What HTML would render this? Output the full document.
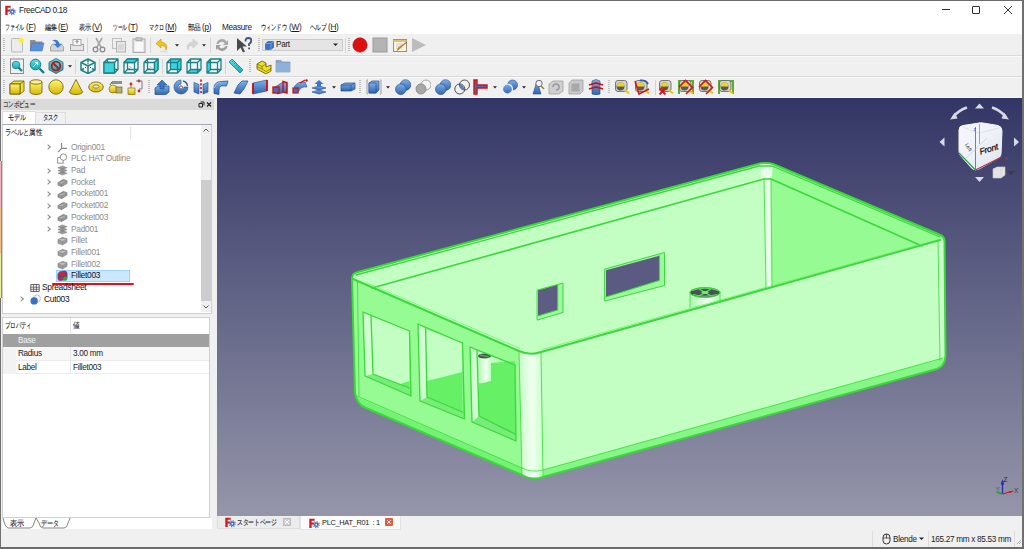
<!DOCTYPE html>
<html><head><meta charset="utf-8">
<style>
*{box-sizing:border-box;margin:0;padding:0}
html,body{width:1024px;height:549px;overflow:hidden;background:#f0f0f0;font-family:"Liberation Sans",sans-serif;color:#000}
.a{position:absolute}
.t{position:absolute;white-space:nowrap;font-size:8.2px;line-height:10px;color:#1a1a1a;letter-spacing:-0.3px}
.m{font-size:8.2px}
.j{font-size:6.4px}
.grip{width:2px;height:14px;background:repeating-linear-gradient(#bdbdbd 0 1px,transparent 1px 2px)}
.sep{width:1px;height:15px;background:#d4d4d4}
.ti{position:absolute;left:71px;white-space:nowrap;font-size:8.4px;line-height:11px;color:#8c8c8c;letter-spacing:-0.28px;margin-top:0.3px}
.arr{position:absolute;left:46px;width:4px;height:4px;border-right:1px solid #8a8a8a;border-top:1px solid #8a8a8a;transform:rotate(45deg)}
.row{position:absolute;left:16px;width:195px;height:14px;font-size:7.6px;line-height:14px;white-space:nowrap}
</style></head>
<body>
<svg width="0" height="0" style="position:absolute">
<defs>
<linearGradient id="gy" x1="0" y1="0" x2="0" y2="1"><stop offset="0" stop-color="#fff27a"/><stop offset="1" stop-color="#d8b800"/></linearGradient>
<linearGradient id="gb" x1="0" y1="0" x2="0" y2="1"><stop offset="0" stop-color="#7fb0e8"/><stop offset="1" stop-color="#2f64b0"/></linearGradient>
<linearGradient id="gt" x1="0" y1="0" x2="0" y2="1"><stop offset="0" stop-color="#5ee0e8"/><stop offset="1" stop-color="#1aa8b4"/></linearGradient>
<symbol id="i-new" viewBox="0 0 16 16"><rect x="2.5" y="1.5" width="11" height="13.5" rx="1" fill="#ececec" stroke="#b8b8b8"/><circle cx="12.2" cy="3.2" r="2.6" fill="#f6f03a"/></symbol>
<symbol id="i-open" viewBox="0 0 16 16"><path d="M1,3h5l1,1.5h6.5V13H1z" fill="#8e8e8e"/><path d="M3,6h12l-2,8H1z" fill="#5a90d8" stroke="#3c70b8" stroke-width="0.5"/></symbol>
<symbol id="i-save" viewBox="0 0 16 16"><path d="M1.5,10l2-3h9l2,3v4h-13z" fill="#d4d4d4" stroke="#8c8c8c" stroke-width="0.7"/><path d="M3,3.5Q9,1 10.5,7h2.3l-4,4-4-4h2.3Q7,4.5 3,3.5z" fill="#3c7cd0"/></symbol>
<symbol id="i-print" viewBox="0 0 16 16"><rect x="1.5" y="7.5" width="13" height="6" fill="#e6e6e6" stroke="#a4a4a4"/><rect x="4" y="2.5" width="8" height="6" fill="#f6f6f6" stroke="#a8a8a8"/><path d="M8,3.5v3M6.5,5l1.5-1.5L9.5,5" stroke="#808080" fill="none"/></symbol>
<symbol id="i-cut" viewBox="0 0 16 16"><path d="M5,1l5.5,10M11,1L5.5,11" stroke="#a8a8a8" stroke-width="1.6" fill="none"/><circle cx="4.5" cy="12.5" r="2.3" fill="none" stroke="#8a8a8a" stroke-width="1.3"/><circle cx="11.5" cy="12.5" r="2.3" fill="none" stroke="#8a8a8a" stroke-width="1.3"/></symbol>
<symbol id="i-copy" viewBox="0 0 16 16"><rect x="1.5" y="1.5" width="9" height="10" fill="#eee" stroke="#c0c0c0"/><rect x="5.5" y="4.5" width="9" height="10.5" fill="#e8e8e8" stroke="#b0b0b0"/><path d="M7,8h6M7,10h6M7,12h6" stroke="#c8c8c8"/></symbol>
<symbol id="i-paste" viewBox="0 0 16 16"><rect x="2" y="2" width="12" height="13.5" fill="#e8e8e8" stroke="#a8a8a8"/><rect x="5" y="0.8" width="6" height="3" fill="#c8c8c8" stroke="#909090" stroke-width="0.6"/><rect x="4" y="5" width="8" height="9" fill="#f8f8f8"/></symbol>
<symbol id="i-undo" viewBox="0 0 16 16"><path d="M6,2L1,6.5 6,11V8.5Q11,8 11,13Q14,6 6,5z" fill="#f4c418" stroke="#c89400" stroke-width="0.6"/><ellipse cx="9" cy="14.5" rx="4" ry="1" fill="#ddd"/></symbol>
<symbol id="i-redo" viewBox="0 0 16 16"><path d="M10,2L15,6.5 10,11V8.5Q5,8 5,13Q2,6 10,5z" fill="#d6d6d6" stroke="#c4c4c4" stroke-width="0.6"/></symbol>
<symbol id="i-refresh" viewBox="0 0 16 16"><path d="M2.5,7A5.5,5.5 0 0 1 12.5,4.5L14,3v5H9l1.8-1.8A3.5,3.5 0 0 0 4.6,7z" fill="#a8a8a8"/><path d="M13.5,9A5.5,5.5 0 0 1 3.5,11.5L2,13V8h5l-1.8,1.8A3.5,3.5 0 0 0 11.4,9z" fill="#a0a0a0"/></symbol>
<symbol id="i-what" viewBox="0 0 16 16"><path d="M1,1v13l3.5-3.5 2.5,5 2-1-2.5-5H11z" fill="#4a4a4a"/><path d="M9.5,4.5Q9.5,1 12.3,1Q15.5,1 15.3,4Q15,6 13,7v2" fill="none" stroke="#3e5680" stroke-width="1.8"/><rect x="12.2" y="10.5" width="1.8" height="1.8" fill="#3e5680"/></symbol>
<symbol id="i-rec" viewBox="0 0 16 16"><circle cx="8" cy="8" r="7.2" fill="#dd1010" stroke="#a00" stroke-width="0.5"/></symbol>
<symbol id="i-stop" viewBox="0 0 16 16"><rect x="1" y="1" width="14" height="14" fill="#b4b4b4" stroke="#9a9a9a"/></symbol>
<symbol id="i-macro" viewBox="0 0 16 16"><rect x="1.5" y="2.5" width="13" height="12" fill="#f8f4e4" stroke="#a09070"/><path d="M1.5,4h13" stroke="#e0c070" stroke-width="2"/><path d="M4,7h7M4,9h5M4,11h6" stroke="#c8c0b0" stroke-width="0.7"/><path d="M15,5L7,12l-1.5,1.5L6,11z" fill="#f0a030" stroke="#905020" stroke-width="0.6"/></symbol>
<symbol id="i-play" viewBox="0 0 16 16"><path d="M1,1L15,8L1,15z" fill="#bcbcbc"/></symbol>
<symbol id="i-dd" viewBox="0 0 4 4"><path d="M0,1.2h4L2,3.4z" fill="#222"/></symbol>
<symbol id="i-fitall" viewBox="0 0 16 16"><rect x="1.5" y="1" width="13" height="14.5" fill="#f0f0f0" stroke="#8c8c8c"/><circle cx="7" cy="7" r="3.8" fill="url(#gt)" stroke="#157c86" stroke-width="0.8"/><path d="M9.5,9.5L13,13" stroke="#157c86" stroke-width="2.2"/></symbol>
<symbol id="i-fitsel" viewBox="0 0 16 16"><circle cx="6.5" cy="6.5" r="5.3" fill="url(#gt)" stroke="#157c86" stroke-width="1"/><path d="M10.5,10.5L15,15" stroke="#157c86" stroke-width="2.4"/><path d="M4.5,8.5L8.5,4.5M6,4.5h2.5v2.5" stroke="#fff" stroke-width="1" fill="none"/></symbol>
<symbol id="i-draw" viewBox="0 0 16 16"><path d="M8,0.5L15,4.3v7.4L8,15.5 1,11.7V4.3z" fill="url(#gt)" stroke="#155e66" stroke-width="0.8"/><circle cx="8" cy="8" r="4.3" fill="none" stroke="#c41010" stroke-width="1.8"/><path d="M5,5L11,11" stroke="#c41010" stroke-width="1.8"/></symbol>
<symbol id="i-iso" viewBox="0 0 16 16"><path d="M8,1L15,4.5v7.5L8,15.5 1,12V4.5z" fill="#f4fbfb" stroke="#1e8088" stroke-width="1.5" fill="none" stroke-linejoin="round"/><path d="M1,4.5L8,8 15,4.5M8,8v7.5M8,1V4M1,12L4,10.5M15,12L12,10.5" stroke="#1e8088" stroke-width="1.5" fill="none" stroke-linejoin="round" stroke-width="1.1"/><path d="M8,4.5v2M5,10l1-1M11,10l-1-1" stroke="#222" stroke-width="0.8"/></symbol>
<symbol id="i-front" viewBox="0 0 16 16"><rect x="2" y="2" width="12" height="12" fill="#f4fbfb"/><path d="M1,4.5H11.5V15H1z M4.5,1H15V11.5H4.5z M1,4.5L4.5,1 M11.5,4.5L15,1 M11.5,15L15,11.5 M1,15L4.5,11.5" stroke="#1e8088" stroke-width="1.3" fill="none" stroke-linejoin="round"/><path d="M1,4.5H11.5V15H1z" fill="#3cd4dc" stroke="#1e8088" stroke-width="1.3"/></symbol>
<symbol id="i-top" viewBox="0 0 16 16"><rect x="2" y="2" width="12" height="12" fill="#f4fbfb"/><path d="M7,8.5l1,1M8,11v1M5.5,11l1-1" stroke="#222" stroke-width="0.7"/><path d="M1,4.5H11.5V15H1z M4.5,1H15V11.5H4.5z M1,4.5L4.5,1 M11.5,4.5L15,1 M11.5,15L15,11.5 M1,15L4.5,11.5" stroke="#1e8088" stroke-width="1.3" fill="none" stroke-linejoin="round"/><path d="M1,4.5L4.5,1H15L11.5,4.5z" fill="#3cd4dc" stroke="#1e8088" stroke-width="1.3" stroke-linejoin="round"/></symbol>
<symbol id="i-right" viewBox="0 0 16 16"><rect x="2" y="2" width="12" height="12" fill="#f4fbfb"/><path d="M7,8.5l1,1M8,11v1M5.5,11l1-1" stroke="#222" stroke-width="0.7"/><path d="M1,4.5H11.5V15H1z M4.5,1H15V11.5H4.5z M1,4.5L4.5,1 M11.5,4.5L15,1 M11.5,15L15,11.5 M1,15L4.5,11.5" stroke="#1e8088" stroke-width="1.3" fill="none" stroke-linejoin="round"/><path d="M11.5,4.5L15,1v10.5L11.5,15z" fill="#3cd4dc" stroke="#1e8088" stroke-width="1.3" stroke-linejoin="round"/></symbol>
<symbol id="i-rear" viewBox="0 0 16 16"><rect x="2" y="2" width="12" height="12" fill="#f4fbfb"/><rect x="4.5" y="1" width="10.5" height="10.5" fill="#3cd4dc"/><path d="M1,4.5H11.5V15H1z M4.5,1H15V11.5H4.5z M1,4.5L4.5,1 M11.5,4.5L15,1 M11.5,15L15,11.5 M1,15L4.5,11.5" stroke="#1e8088" stroke-width="1.3" fill="none" stroke-linejoin="round"/></symbol>
<symbol id="i-bottom" viewBox="0 0 16 16"><rect x="2" y="2" width="12" height="12" fill="#f4fbfb"/><path d="M1,15L4.5,11.5H15L11.5,15z" fill="#3cd4dc"/><path d="M1,4.5H11.5V15H1z M4.5,1H15V11.5H4.5z M1,4.5L4.5,1 M11.5,4.5L15,1 M11.5,15L15,11.5 M1,15L4.5,11.5" stroke="#1e8088" stroke-width="1.3" fill="none" stroke-linejoin="round"/></symbol>
<symbol id="i-left" viewBox="0 0 16 16"><rect x="2" y="2" width="12" height="12" fill="#f4fbfb"/><path d="M1,4.5L4.5,1v10.5L1,15z" fill="#3cd4dc"/><path d="M1,4.5H11.5V15H1z M4.5,1H15V11.5H4.5z M1,4.5L4.5,1 M11.5,4.5L15,1 M11.5,15L15,11.5 M1,15L4.5,11.5" stroke="#1e8088" stroke-width="1.3" fill="none" stroke-linejoin="round"/></symbol>
<symbol id="i-ruler" viewBox="0 0 16 16"><path d="M1,4L4,1 15,12 12,15z" fill="url(#gt)" stroke="#157c86" stroke-width="0.8"/><path d="M4,4l1.5-1.5M6,6l1.5-1.5M8,8l1.5-1.5M10,10l1.5-1.5" stroke="#157c86" stroke-width="0.7"/></symbol>
<symbol id="i-partY" viewBox="0 0 16 16"><path d="M1,6L6,3 10,5V9L15,7v6L10,16 1,11z" fill="#f0e020" stroke="#605000" stroke-width="0.8"/><path d="M1,6l5,2.5L10,6M6,8.5V11l4,2.5 5-3M6,11L1,8.5" fill="none" stroke="#605000" stroke-width="0.6"/></symbol>
<symbol id="i-folder" viewBox="0 0 16 16"><path d="M1,2.5h5l1.5,1.5H15V14H1z" fill="#8aa6c8" stroke="#6c88a8" stroke-width="0.6"/><rect x="1" y="5" width="14" height="9" fill="#8fb0d8"/></symbol>
<symbol id="i-box" viewBox="0 0 16 16"><path d="M1,5L5,2H15V12L11,15H1z" fill="#f0e030" stroke="#6a5a00" stroke-width="0.8"/><path d="M1,5H11V15M11,5L15,2" fill="none" stroke="#6a5a00" stroke-width="0.8"/><rect x="1" y="5" width="10" height="10" fill="url(#gy)" stroke="#6a5a00" stroke-width="0.8"/></symbol>
<symbol id="i-cyl" viewBox="0 0 16 16"><path d="M2,3V13A6,2.5 0 0 0 14,13V3z" fill="url(#gy)" stroke="#6a5a00" stroke-width="0.8"/><ellipse cx="8" cy="3" rx="6" ry="2.2" fill="#fbf090" stroke="#6a5a00" stroke-width="0.8"/></symbol>
<symbol id="i-sph" viewBox="0 0 16 16"><circle cx="8" cy="8" r="7.2" fill="url(#gy)" stroke="#6a5a00" stroke-width="0.8"/></symbol>
<symbol id="i-cone" viewBox="0 0 16 16"><path d="M8,0.5L14.5,13A6.5,2.5 0 0 1 1.5,13z" fill="url(#gy)" stroke="#6a5a00" stroke-width="0.8"/></symbol>
<symbol id="i-torus" viewBox="0 0 16 16"><ellipse cx="8" cy="8" rx="7.3" ry="5" fill="url(#gy)" stroke="#6a5a00" stroke-width="0.8"/><ellipse cx="8" cy="7.5" rx="3" ry="1.6" fill="#f0f0f0" stroke="#6a5a00" stroke-width="0.7"/></symbol>
<symbol id="i-prims" viewBox="0 0 16 16"><rect x="5" y="2" width="10" height="3" fill="#909090"/><circle cx="6" cy="10" r="4" fill="url(#gy)" stroke="#6a5a00" stroke-width="0.6"/><rect x="9" y="8" width="6" height="6" fill="#b8b070" stroke="#605000" stroke-width="0.6"/><path d="M3,6l2-3" stroke="#605000"/></symbol>
<symbol id="i-shapeb" viewBox="0 0 16 16"><rect x="1" y="9" width="7" height="6.5" fill="url(#gy)" stroke="#6a5a00" stroke-width="0.6"/><circle cx="4" cy="5" r="1.4" fill="#e02020"/><circle cx="12" cy="2" r="1.4" fill="#e02020"/><circle cx="12" cy="12" r="1.4" fill="#e02020"/><path d="M9,2h6v8h-3M4,6v3" stroke="#707070" fill="none" stroke-width="0.9"/></symbol>
<symbol id="i-extr" viewBox="0 0 16 16"><path d="M1,9L4,7H15V13L12,15.5H1z" fill="url(#gb)" stroke="#1e4a88" stroke-width="0.7"/><path d="M8,1L13,6H10V10H6V6H3z" fill="#3a78c8" stroke="#1e4a88" stroke-width="0.6"/></symbol>
<symbol id="i-rev" viewBox="0 0 16 16"><path d="M8,1A7,7 0 1 0 15,8H11A3,3 0 1 1 8,5z" fill="url(#gb)" stroke="#1e4a88" stroke-width="0.6"/><path d="M10,2Q14,3 14.5,7" stroke="#2a5aa0" stroke-width="1.4" fill="none"/><circle cx="8" cy="8.5" r="1.6" fill="none" stroke="#333" stroke-width="0.8"/></symbol>
<symbol id="i-mirror" viewBox="0 0 16 16"><path d="M1,3.5L6,5.5V15L1,13z" fill="url(#gb)" stroke="#1e4a88" stroke-width="0.6"/><path d="M15,3.5L10,5.5V15L15,13z" fill="url(#gb)" stroke="#1e4a88" stroke-width="0.6"/><path d="M8,0.5V15.5" stroke="#d01010" stroke-width="1.6" stroke-dasharray="2.2,1.6"/></symbol>
<symbol id="i-fillet" viewBox="0 0 16 16"><path d="M1,14.5V9Q1,3 8,2.5L15,2 13.5,7H8.5Q6,7.5 6,11V15.5z" fill="url(#gb)" stroke="#1e4a88" stroke-width="0.7"/><path d="M1.5,9Q2,4 8,3.5" stroke="#a8c8f0" stroke-width="0.8" fill="none"/></symbol>
<symbol id="i-chamf" viewBox="0 0 16 16"><path d="M1,14L5,6 9,2H15L11,10 7,15z" fill="url(#gb)" stroke="#1e4a88" stroke-width="0.7"/></symbol>
<symbol id="i-face" viewBox="0 0 16 16"><path d="M1,4L15,1V12L1,15z" fill="url(#gb)" stroke="#1e4a88" stroke-width="0.6"/><path d="M1,4V15M15,1V12" stroke="#d01010" stroke-width="1.8"/></symbol>
<symbol id="i-loft" viewBox="0 0 16 16"><path d="M3,8L11,3 15,4V13L5,15z" fill="url(#gb)" stroke="#1e4a88" stroke-width="0.6"/><rect x="1" y="8" width="6" height="6" fill="#3a70c0" stroke="#d01010" stroke-width="1.4"/><path d="M11,2.5L15,3.5V14L11,13z" fill="none" stroke="#d01010" stroke-width="1.4"/></symbol>
<symbol id="i-sweep" viewBox="0 0 16 16"><path d="M2,8Q6,2 13,3L15,8Q9,7 6,13z" fill="url(#gb)" stroke="#1e4a88" stroke-width="0.6"/><rect x="1" y="9" width="5" height="5" fill="#3a70c0" stroke="#d01010" stroke-width="1.2"/><path d="M8,4L13,1" stroke="#d01010" stroke-width="1.2"/><circle cx="14.5" cy="1.5" r="1.2" fill="#d01010"/></symbol>
<symbol id="i-offset" viewBox="0 0 16 16"><path d="M1,13L8,11 15,13 8,15z" fill="url(#gb)" stroke="#1e4a88" stroke-width="0.6"/><path d="M1,9L8,7 15,9 8,11z" fill="url(#gb)" stroke="#1e4a88" stroke-width="0.6"/><path d="M8,1L12.5,5H10V8H6V5H3.5z" fill="#3a78c8"/></symbol>
<symbol id="i-thick" viewBox="0 0 16 16"><path d="M1,6L5,4H15V10L11,12H1z" fill="url(#gb)" stroke="#1e4a88" stroke-width="0.7"/><path d="M1,6H11V12M11,6L15,4" fill="none" stroke="#1e4a88" stroke-width="0.6"/></symbol>
<symbol id="i-bool" viewBox="0 0 16 16"><path d="M2,1H1V15H2M14,1h1V15H14" fill="none" stroke="#a0a0a0" stroke-width="1"/><path d="M3,4L6,2H13V11L10,14H3z" fill="url(#gb)" stroke="#1e4a88" stroke-width="0.7"/><rect x="3" y="4" width="7" height="10" fill="url(#gb)" stroke="#1e4a88" stroke-width="0.6"/></symbol>
<symbol id="i-cut2" viewBox="0 0 16 16"><circle cx="11" cy="6" r="5" fill="#f4f4f4" stroke="#909090" stroke-width="0.8"/><circle cx="6" cy="10" r="5" fill="#a8a8a8" stroke="#808080" stroke-width="0.8"/></symbol>
<symbol id="i-fuse" viewBox="0 0 16 16"><circle cx="10.5" cy="6" r="5.3" fill="url(#gb)" stroke="#1e4a88" stroke-width="0.6"/><circle cx="5.8" cy="10.2" r="5.3" fill="url(#gb)" stroke="#1e4a88" stroke-width="0.6"/></symbol>
<symbol id="i-common" viewBox="0 0 16 16"><circle cx="10.5" cy="6" r="5" fill="none" stroke="#404040" stroke-width="0.9"/><circle cx="5.8" cy="10" r="5" fill="none" stroke="#404040" stroke-width="0.9"/><path d="M6,5.5A5,5 0 0 1 10.3,11 5,5 0 0 1 6,5.5z" fill="#4a80c8"/></symbol>
<symbol id="i-sect" viewBox="0 0 16 16"><path d="M1,1H4V6H14V9H4V15H1z" fill="#3a70c0" stroke="#d01010" stroke-width="1.4"/></symbol>
<symbol id="i-join" viewBox="0 0 16 16"><circle cx="10.5" cy="6" r="5" fill="url(#gb)" stroke="#1e4a88" stroke-width="0.6"/><circle cx="5.5" cy="10" r="5" fill="url(#gb)" stroke="#e8eef8" stroke-width="1.2"/></symbol>
<symbol id="i-check" viewBox="0 0 16 16"><path d="M3,15L7,2 11,15z" fill="url(#gb)" stroke="#1e4a88" stroke-width="0.6"/><circle cx="9" cy="4.5" r="3.2" fill="#eef" stroke="#606060" stroke-width="0.9"/><path d="M11,7l3,3" stroke="#b08020" stroke-width="1.6"/></symbol>
<symbol id="i-defeat" viewBox="0 0 16 16"><path d="M1,5L5,2H15V12L11,15H1z" fill="#cfcfcf" stroke="#9a9a9a" stroke-width="0.7"/><path d="M5,8A3,3 0 1 1 8,11" stroke="#999" stroke-width="1.5" fill="none"/></symbol>
<symbol id="i-gface" viewBox="0 0 16 16"><path d="M1,4L4,1H15V12L12,15H1z" fill="#cacaca" stroke="#9a9a9a" stroke-width="0.7"/><rect x="3.5" y="4.5" width="8" height="8" fill="#a8a8a8"/></symbol>
<symbol id="i-xsec" viewBox="0 0 16 16"><path d="M4,2L8,0.5 12,2V15L8,16 4,15z" fill="url(#gb)" stroke="#1e4a88" stroke-width="0.6"/><path d="M1,6L8,4 15,6M1,10L8,8 15,10" stroke="#d01010" stroke-width="1.8" fill="none"/></symbol>
<symbol id="i-mlin" viewBox="0 0 16 16"><rect x="1.5" y="1.5" width="11.5" height="11" rx="2.5" fill="#d4d4d4" stroke="#6a6a6a" stroke-width="0.9"/><circle cx="6.5" cy="7.5" r="4" fill="#5a5a5a"/><path d="M2.5,7.5A4,4 0 0 1 10.5,7.5z" fill="#f0d41a"/><path d="M11,11l4,3.5" stroke="#e0c818" stroke-width="2"/></symbol>
<symbol id="i-mang" viewBox="0 0 16 16"><rect x="1.5" y="1.5" width="11.5" height="11" rx="2.5" fill="#d4d4d4" stroke="#6a6a6a" stroke-width="0.9"/><circle cx="6.5" cy="7.5" r="4" fill="#5a5a5a"/><path d="M2.5,7.5A4,4 0 0 1 10.5,7.5z" fill="#f0d41a"/><path d="M11,11l4,3.5" stroke="#e0c818" stroke-width="2"/><path d="M6,1.5Q12,1 14,5" stroke="#3060b0" stroke-width="1.8" fill="none"/><path d="M1,2L5,15 15,10" stroke="#d01818" stroke-width="1.6" fill="none"/></symbol>
<symbol id="i-mref" viewBox="0 0 16 16"><rect x="1.5" y="1.5" width="11.5" height="11" rx="2.5" fill="#d4d4d4" stroke="#6a6a6a" stroke-width="0.9"/><circle cx="6.5" cy="7.5" r="4" fill="#5a5a5a"/><path d="M2.5,7.5A4,4 0 0 1 10.5,7.5z" fill="#f0d41a"/><path d="M11,11l4,3.5" stroke="#e0c818" stroke-width="2"/><path d="M1.5,9.5l6,6M7.5,9.5l-6,6" stroke="#d01818" stroke-width="1.8"/></symbol>
<symbol id="i-mclr" viewBox="0 0 16 16"><path d="M1,15V2H15V15" stroke="#58b030" stroke-width="2" fill="none"/><rect x="1.5" y="1.5" width="11.5" height="11" rx="2.5" fill="#d4d4d4" stroke="#6a6a6a" stroke-width="0.9"/><circle cx="6.5" cy="7.5" r="4" fill="#5a5a5a"/><path d="M2.5,7.5A4,4 0 0 1 10.5,7.5z" fill="#f0d41a"/><path d="M11,11l4,3.5" stroke="#e0c818" stroke-width="2"/><path d="M1,8L7.5,1.5 14.5,8.5 8,15" fill="none" stroke="#d01818" stroke-width="1.6"/></symbol>
<symbol id="i-m3d" viewBox="0 0 16 16"><rect x="1.5" y="1.5" width="11.5" height="11" rx="2.5" fill="#d4d4d4" stroke="#6a6a6a" stroke-width="0.9"/><circle cx="6.5" cy="7.5" r="4" fill="#5a5a5a"/><path d="M2.5,7.5A4,4 0 0 1 10.5,7.5z" fill="#f0d41a"/><path d="M11,11l4,3.5" stroke="#e0c818" stroke-width="2"/><path d="M1,8L7.5,1.5 14.5,8.5 8,15" fill="none" stroke="#d01818" stroke-width="1.6"/></symbol>
<symbol id="i-mdelta" viewBox="0 0 16 16"><path d="M1,15V2H15V15" stroke="#58b030" stroke-width="2" fill="none"/><rect x="1.5" y="1.5" width="11.5" height="11" rx="2.5" fill="#d4d4d4" stroke="#6a6a6a" stroke-width="0.9"/><circle cx="6.5" cy="7.5" r="4" fill="#5a5a5a"/><path d="M2.5,7.5A4,4 0 0 1 10.5,7.5z" fill="#f0d41a"/><path d="M11,11l4,3.5" stroke="#e0c818" stroke-width="2"/></symbol>
<symbol id="t-origin" viewBox="0 0 12 12"><path d="M5,1V7L1,11M5,7H11" stroke="#8a8a8a" stroke-width="1.3" fill="none"/></symbol>
<symbol id="t-sketch" viewBox="0 0 12 12"><rect x="0.7" y="5" width="6" height="6" fill="#fff" stroke="#8a8a8a"/><circle cx="7" cy="4.5" r="3.5" fill="#fff" stroke="#8a8a8a"/></symbol>
<symbol id="t-pad" viewBox="0 0 12 12"><path d="M1,3L6,1 11,3 6,5z M1,6L6,4 11,6 6,8z M1,9L6,7 11,9 6,11z" fill="#9a9a9a" stroke="#707070" stroke-width="0.5"/></symbol>
<symbol id="t-pocket" viewBox="0 0 12 12"><path d="M1,6L7,2.5 11,4V7L5,10.5 1,9z" fill="#9a9a9a" stroke="#6e6e6e" stroke-width="0.5"/><path d="M1,6L5,7.5 11,4" fill="#bcbcbc" stroke="#707070" stroke-width="0.5"/><path d="M5,7.5V10.5M3,5.5L7,3.7" stroke="#707070" stroke-width="0.5"/></symbol>
<symbol id="t-fillet" viewBox="0 0 12 12"><path d="M1,5L6,2.5 11,4V8L6,11 1,9z" fill="#9c9c9c" stroke="#7a7a7a" stroke-width="0.5"/><path d="M1,5L6,7 11,4" fill="#c4c4c4" stroke="#808080" stroke-width="0.5"/><path d="M6,7V11" stroke="#808080" stroke-width="0.5"/></symbol>
<symbol id="t-fillet3" viewBox="0 0 12 12"><path d="M1,5Q1,3 3,2L8,1Q11,1 11,4V8Q11,10 9,10.5L4,11.5Q1,12 1,9z" fill="#c02a40" stroke="#404090" stroke-width="0.7"/><path d="M1,6L6,7.5 11,4" stroke="#3050a0" stroke-width="1.2" fill="none"/><circle cx="9" cy="9.5" r="2.3" fill="#20b040"/></symbol>
<symbol id="t-sheet" viewBox="0 0 12 12"><rect x="1" y="2" width="10" height="8" fill="#fff" stroke="#333" stroke-width="0.9"/><path d="M1,5H11M1,7.5H11M4.3,2V10M7.6,2V10" stroke="#333" stroke-width="0.8"/></symbol>
<symbol id="t-cut" viewBox="0 0 12 12"><circle cx="7.5" cy="5" r="4" fill="#f4f4f4" stroke="#999" stroke-width="0.6"/><circle cx="4.5" cy="7.5" r="4" fill="#3a70c0"/></symbol>
<symbol id="f-logo" viewBox="0 0 12 12"><path d="M0.3,0.8H6.2V3H2.9V5H5.4V7.2H2.9V10.8H0.3z" fill="#d41a24"/><circle cx="8" cy="7.3" r="2.6" fill="#3a68b4"/><circle cx="8" cy="7.3" r="3.2" fill="none" stroke="#3a68b4" stroke-width="1.3" stroke-dasharray="1.1,1.41"/><circle cx="8" cy="7.3" r="1" fill="#fff"/></symbol>
</defs></svg>

<!-- title bar -->
<div class="a" style="left:0;top:0;width:1024px;height:34px;background:#fff"></div>
<svg class="a" style="left:5px;top:5px" width="11" height="11"><use href="#f-logo"/></svg>
<div class="t" style="left:19px;top:5px;font-size:8.3px;letter-spacing:-0.42px;color:#222">FreeCAD 0.18</div>
<!-- window buttons -->
<div class="a" style="left:942px;top:9px;width:8px;height:1px;background:#333"></div>
<div class="a" style="left:972px;top:6px;width:8px;height:8px;border:1px solid #333;border-radius:1px"></div>
<svg class="a" style="left:1003px;top:5px" width="10" height="10"><path d="M1,1L9,9M9,1L1,9" stroke="#333" stroke-width="1"/></svg>
<!-- menu -->
<div class="t m" style="left:5px;top:23px"><span style="display:inline-block;width:21px;height:10px;vertical-align:top;font-size:8.4px"><span style="display:inline-block;transform:scaleX(0.625);transform-origin:0 0;position:relative;top:-0.8px;color:#111;-webkit-text-stroke:0.1px #222">ファイル</span></span>(<u>F</u>)</div>
<div class="t m" style="left:45px;top:23px"><span style="display:inline-block;width:13px;height:10px;vertical-align:top;font-size:8.4px"><span style="display:inline-block;transform:scaleX(0.774);transform-origin:0 0;position:relative;top:-0.8px;color:#111;-webkit-text-stroke:0.1px #222">編集</span></span>(<u>E</u>)</div>
<div class="t m" style="left:79px;top:23px"><span style="display:inline-block;width:13px;height:10px;vertical-align:top;font-size:8.4px"><span style="display:inline-block;transform:scaleX(0.774);transform-origin:0 0;position:relative;top:-0.8px;color:#111;-webkit-text-stroke:0.1px #222">表示</span></span>(<u>V</u>)</div>
<div class="t m" style="left:113px;top:23px"><span style="display:inline-block;width:15px;height:10px;vertical-align:top;font-size:8.4px"><span style="display:inline-block;transform:scaleX(0.595);transform-origin:0 0;position:relative;top:-0.8px;color:#111;-webkit-text-stroke:0.1px #222">ツール</span></span>(<u>T</u>)</div>
<div class="t m" style="left:149px;top:23px"><span style="display:inline-block;width:16px;height:10px;vertical-align:top;font-size:8.4px"><span style="display:inline-block;transform:scaleX(0.635);transform-origin:0 0;position:relative;top:-0.8px;color:#111;-webkit-text-stroke:0.1px #222">マクロ</span></span>(<u>M</u>)</div>
<div class="t m" style="left:188px;top:23px"><span style="display:inline-block;width:14px;height:10px;vertical-align:top;font-size:8.4px"><span style="display:inline-block;transform:scaleX(0.833);transform-origin:0 0;position:relative;top:-0.8px;color:#111;-webkit-text-stroke:0.1px #222">部品</span></span>(<u>p</u>)</div>
<div class="t m" style="left:222px;top:23px">Measure</div>
<div class="t m" style="left:261px;top:23px"><span style="display:inline-block;width:28px;height:10px;vertical-align:top;font-size:8.4px"><span style="display:inline-block;transform:scaleX(0.667);transform-origin:0 0;position:relative;top:-0.8px;color:#111;-webkit-text-stroke:0.1px #222">ウィンドウ</span></span>(<u>W</u>)</div>
<div class="t m" style="left:310px;top:23px"><span style="display:inline-block;width:18px;height:10px;vertical-align:top;font-size:8.4px"><span style="display:inline-block;transform:scaleX(0.714);transform-origin:0 0;position:relative;top:-0.8px;color:#111;-webkit-text-stroke:0.1px #222">ヘルプ</span></span>(<u>H</u>)</div>

<!-- toolbars -->
<div class="a" style="left:1px;top:34px;width:1021px;height:64px;background:#f0f0f0"></div>
<div class="a" style="left:1px;top:55px;width:1021px;height:1px;background:#dadada"></div>
<div class="a" style="left:1px;top:76px;width:1021px;height:1px;background:#dadada"></div>
<div class="a" style="left:1px;top:56px;width:1021px;height:1px;background:#fafafa"></div>
<div class="a" style="left:1px;top:77px;width:1021px;height:1px;background:#fafafa"></div>
<div class="a" style="left:1px;top:97px;width:1021px;height:1px;background:#f3f3f3"></div>
<!-- combo Part -->
<div class="a" style="left:262px;top:39px;width:81px;height:12px;background:#e5e5e5;border:1px solid #cacaca"></div>
<svg class="a" style="left:265px;top:41px" width="9" height="9"><path d="M0.5,2.5L3,0.5H8.5V6.5L6,8.5H0.5z" fill="#3a70c0" stroke="#1e4a88" stroke-width="0.5"/><path d="M0.5,2.5H6V8.5M6,2.5L8.5,0.5" stroke="#a8c8f0" stroke-width="0.5" fill="none"/></svg>
<div class="t" style="left:276px;top:40px;">Part</div>
<svg class="a" style="left:333px;top:43px" width="5" height="4"><path d="M0,0.5h5L2.5,3z" fill="#222"/></svg>
<div class="a grip" style="left:3px;top:38px"></div>
<div class="a grip" style="left:3px;top:59px"></div>
<div class="a grip" style="left:3px;top:80px"></div>
<div class="a sep" style="left:87px;top:38px"></div>
<div class="a sep" style="left:150px;top:38px"></div>
<div class="a sep" style="left:210px;top:38px"></div>
<div class="a grip" style="left:258px;top:38px"></div>
<div class="a sep" style="left:345px;top:38px"></div>
<div class="a grip" style="left:348px;top:38px"></div>
<div class="a sep" style="left:75px;top:59px"></div>
<div class="a sep" style="left:99px;top:59px"></div>
<div class="a sep" style="left:162px;top:59px"></div>
<div class="a sep" style="left:225px;top:59px"></div>
<div class="a grip" style="left:249px;top:59px"></div>
<div class="a grip" style="left:148px;top:80px"></div>
<div class="a grip" style="left:359px;top:80px"></div>
<div class="a grip" style="left:608px;top:80px"></div>
<div class="a sep" style="left:655px;top:80px"></div>
<svg class="a" style="left:9px;top:37px" width="16" height="16"><use href="#i-new"/></svg>
<svg class="a" style="left:29px;top:37px" width="16" height="16"><use href="#i-open"/></svg>
<svg class="a" style="left:49px;top:37px" width="16" height="16"><use href="#i-save"/></svg>
<svg class="a" style="left:69px;top:37px" width="16" height="16"><use href="#i-print"/></svg>
<svg class="a" style="left:91px;top:37px" width="16" height="16"><use href="#i-cut"/></svg>
<svg class="a" style="left:111px;top:37px" width="16" height="16"><use href="#i-copy"/></svg>
<svg class="a" style="left:131px;top:37px" width="16" height="16"><use href="#i-paste"/></svg>
<svg class="a" style="left:155px;top:37px" width="16" height="16"><use href="#i-undo"/></svg>
<svg class="a" style="left:183px;top:37px" width="16" height="16"><use href="#i-redo"/></svg>
<svg class="a" style="left:214px;top:37px" width="16" height="16"><use href="#i-refresh"/></svg>
<svg class="a" style="left:236px;top:37px" width="16" height="16"><use href="#i-what"/></svg>
<svg class="a" style="left:175px;top:43px" width="4" height="4"><use href="#i-dd"/></svg>
<svg class="a" style="left:202px;top:43px" width="4" height="4"><use href="#i-dd"/></svg>
<svg class="a" style="left:352px;top:37px" width="16" height="16"><use href="#i-rec"/></svg>
<svg class="a" style="left:372px;top:37px" width="16" height="16"><use href="#i-stop"/></svg>
<svg class="a" style="left:392px;top:37px" width="16" height="16"><use href="#i-macro"/></svg>
<svg class="a" style="left:411px;top:37px" width="16" height="16"><use href="#i-play"/></svg>
<svg class="a" style="left:9px;top:58px" width="16" height="16"><use href="#i-fitall"/></svg>
<svg class="a" style="left:29px;top:58px" width="16" height="16"><use href="#i-fitsel"/></svg>
<svg class="a" style="left:48px;top:58px" width="16" height="16"><use href="#i-draw"/></svg>
<svg class="a" style="left:80px;top:58px" width="16" height="16"><use href="#i-iso"/></svg>
<svg class="a" style="left:103px;top:58px" width="16" height="16"><use href="#i-front"/></svg>
<svg class="a" style="left:123px;top:58px" width="16" height="16"><use href="#i-top"/></svg>
<svg class="a" style="left:143px;top:58px" width="16" height="16"><use href="#i-right"/></svg>
<svg class="a" style="left:166px;top:58px" width="16" height="16"><use href="#i-rear"/></svg>
<svg class="a" style="left:186px;top:58px" width="16" height="16"><use href="#i-bottom"/></svg>
<svg class="a" style="left:206px;top:58px" width="16" height="16"><use href="#i-left"/></svg>
<svg class="a" style="left:228px;top:58px" width="16" height="16"><use href="#i-ruler"/></svg>
<svg class="a" style="left:256px;top:58px" width="16" height="16"><use href="#i-partY"/></svg>
<svg class="a" style="left:275px;top:58px" width="16" height="16"><use href="#i-folder"/></svg>
<svg class="a" style="left:68px;top:64px" width="4" height="4"><use href="#i-dd"/></svg>
<svg class="a" style="left:9px;top:79px" width="16" height="16"><use href="#i-box"/></svg>
<svg class="a" style="left:28px;top:79px" width="16" height="16"><use href="#i-cyl"/></svg>
<svg class="a" style="left:48px;top:79px" width="16" height="16"><use href="#i-sph"/></svg>
<svg class="a" style="left:68px;top:79px" width="16" height="16"><use href="#i-cone"/></svg>
<svg class="a" style="left:88px;top:79px" width="16" height="16"><use href="#i-torus"/></svg>
<svg class="a" style="left:107px;top:79px" width="16" height="16"><use href="#i-prims"/></svg>
<svg class="a" style="left:127px;top:79px" width="16" height="16"><use href="#i-shapeb"/></svg>
<svg class="a" style="left:154px;top:79px" width="16" height="16"><use href="#i-extr"/></svg>
<svg class="a" style="left:173px;top:79px" width="16" height="16"><use href="#i-rev"/></svg>
<svg class="a" style="left:193px;top:79px" width="16" height="16"><use href="#i-mirror"/></svg>
<svg class="a" style="left:213px;top:79px" width="16" height="16"><use href="#i-fillet"/></svg>
<svg class="a" style="left:233px;top:79px" width="16" height="16"><use href="#i-chamf"/></svg>
<svg class="a" style="left:252px;top:79px" width="16" height="16"><use href="#i-face"/></svg>
<svg class="a" style="left:272px;top:79px" width="16" height="16"><use href="#i-loft"/></svg>
<svg class="a" style="left:292px;top:79px" width="16" height="16"><use href="#i-sweep"/></svg>
<svg class="a" style="left:311px;top:79px" width="16" height="16"><use href="#i-offset"/></svg>
<svg class="a" style="left:340px;top:79px" width="16" height="16"><use href="#i-thick"/></svg>
<svg class="a" style="left:366px;top:79px" width="16" height="16"><use href="#i-bool"/></svg>
<svg class="a" style="left:395px;top:79px" width="16" height="16"><use href="#i-fuse"/></svg>
<svg class="a" style="left:415px;top:79px" width="16" height="16"><use href="#i-cut2"/></svg>
<svg class="a" style="left:435px;top:79px" width="16" height="16"><use href="#i-fuse"/></svg>
<svg class="a" style="left:454px;top:79px" width="16" height="16"><use href="#i-common"/></svg>
<svg class="a" style="left:473px;top:79px" width="16" height="16"><use href="#i-sect"/></svg>
<svg class="a" style="left:502px;top:79px" width="16" height="16"><use href="#i-join"/></svg>
<svg class="a" style="left:530px;top:79px" width="16" height="16"><use href="#i-check"/></svg>
<svg class="a" style="left:548px;top:79px" width="16" height="16"><use href="#i-defeat"/></svg>
<svg class="a" style="left:568px;top:79px" width="16" height="16"><use href="#i-gface"/></svg>
<svg class="a" style="left:588px;top:79px" width="16" height="16"><use href="#i-xsec"/></svg>
<svg class="a" style="left:614px;top:79px" width="16" height="16"><use href="#i-mlin"/></svg>
<svg class="a" style="left:634px;top:79px" width="16" height="16"><use href="#i-mang"/></svg>
<svg class="a" style="left:658px;top:79px" width="16" height="16"><use href="#i-mref"/></svg>
<svg class="a" style="left:678px;top:79px" width="16" height="16"><use href="#i-mclr"/></svg>
<svg class="a" style="left:698px;top:79px" width="16" height="16"><use href="#i-m3d"/></svg>
<svg class="a" style="left:718px;top:79px" width="16" height="16"><use href="#i-mdelta"/></svg>
<svg class="a" style="left:332px;top:85px" width="4" height="4"><use href="#i-dd"/></svg>
<svg class="a" style="left:386px;top:85px" width="4" height="4"><use href="#i-dd"/></svg>
<svg class="a" style="left:493px;top:85px" width="4" height="4"><use href="#i-dd"/></svg>
<svg class="a" style="left:522px;top:85px" width="4" height="4"><use href="#i-dd"/></svg>

<!-- viewport -->
<div class="a" style="left:217px;top:98px;width:805px;height:418px;background:linear-gradient(#333565,#9596aa)"></div>
<svg class="a" style="left:0;top:0" width="1024" height="549" viewBox="0 0 1024 549">
<defs>
<linearGradient id="gcs" x1="0" x2="1" y1="0" y2="0"><stop offset="0" stop-color="#c8ffc8"/><stop offset="0.55" stop-color="#f0fff0"/><stop offset="1" stop-color="#c8ffc8"/></linearGradient>
<linearGradient id="gcy" x1="0" x2="1" y1="0" y2="0"><stop offset="0" stop-color="#a8f8a8"/><stop offset="0.6" stop-color="#f4fff4"/><stop offset="1" stop-color="#b8ffb8"/></linearGradient>
</defs>
<g stroke-linejoin="round">
<!-- silhouette (left outer wall color) -->
<path d="M352,279 Q352,273 358,272 L758,164 Q766,162 773,164 L940.5,235 Q944.5,237 944.5,241 L945.5,356 Q945,366 937,369 L543,477 Q532,481 522,475 L366,408 Q357,405 355,393 Z" fill="#96fb92"/>
<!-- front long wall outer -->
<path d="M541,352 L940,240 Q944.5,237 944.5,241 L945.5,356 Q945,366 937,369 L543,477 Z" fill="#c3ffc3"/>
<!-- top region (light) -->
<path d="M352,279 Q352,273 358,272 L758,164 Q766,162 773,164 L766,179 L768,287 L541,352 Q530,355 519,351 Z" fill="#c3ffc3"/>
<!-- back-short inner wall + rim (medium) -->
<path d="M773,164 L940.5,235 Q944.5,237 940,240 L768,287 L766,179 Z" fill="#96fb92"/>
<!-- corner patches -->
<path d="M760,164 L773,164 L772,178 L762,179 Z" fill="#e6ffe6"/>
<path d="M764,179 L771,179 L772,287 L766,288 Z" fill="url(#gcs)"/>
<!-- front corner strip -->
<path d="M519,351 Q530,356 541,352 L543,477 Q532,481 522,475 Z" fill="url(#gcs)"/>
<!-- right corner strip -->
<path d="M938,240 Q943,238 944.5,241 L945.5,356 Q945,364 940,360 Z" fill="#ccffcc"/>
<path d="M357,397 L522,468 L522,475 L366,408 Q357,405 355,393 Z" fill="#74f274"/>
<path d="M543,470 L943,358 Q945,366 937,369 L543,477 Z" fill="#86f686"/>
<!-- back big window -->
<path d="M605,269 L664.5,252.5 L664.5,285.5 L605,301 Z" fill="#9cf89c"/>
<path d="M606,270.3 L659.4,255.7 L659.4,280.4 L606,297 Z" fill="#5b5a82"/>
<!-- back small window -->
<path d="M537.5,290 L563,283 L563,312.5 L537.5,320 Z" fill="#9cf89c"/>
<path d="M538,290.2 L557.7,284.8 L557.7,309.9 L538,315.9 Z" fill="#5d5c82"/>
<!-- cylinder post -->
<path d="M690,292 L720,292 L720,303 Q705,310 690,307 Z" fill="url(#gcy)"/>
<ellipse cx="705" cy="292.5" rx="15" ry="5" fill="#4e4e5c"/>
<path d="M692,290.5 Q705,286 718,290.5 M693,294.5 Q705,298 717,294.5" stroke="#58e058" stroke-width="1.1" fill="none"/>
<path d="M699,289 L711,296 M711,289 L699,296" stroke="#58e058" stroke-width="1.3"/>
<ellipse cx="705" cy="292.5" rx="3.5" ry="1.4" fill="#70f070"/>
<!-- left wall windows -->
<path d="M363,312 L409.5,331 L411,396 L365,376 Z" fill="#78ec78"/>
<path d="M371,316 L409.5,331 L409.5,388 L373,374 Z" fill="#c3ffc3"/>
<path d="M363,312 L371,316 L373,374 L365,376 Z" fill="#d2ffd2"/>
<path d="M397,385 L409.5,381 L409.5,388 Z" fill="#66f066"/>
<path d="M418,324 L462.5,343 L464.5,419 L420,401 Z" fill="#78ec78"/>
<path d="M425.6,329 L462.5,343 L462.5,412 L427,397 Z" fill="#c3ffc3"/>
<path d="M427,381 L462.5,372 L462.5,412 L427,397 Z" fill="#66f066"/>
<path d="M418,324 L425.6,329 L427,397 L420,401 Z" fill="#d2ffd2"/>
<path d="M470,347 L515,365 L516,441 L472,422 Z" fill="#78ec78"/>
<path d="M477,351 L515,365 L515,434 L479,416 Z" fill="#c3ffc3"/>
<path d="M479,383 L491,381 L491,363 L515,361 L515,434 L479,416 Z" fill="#66f066"/>
<path d="M470,347 L477,351 L479,416 L472,422 Z" fill="#d2ffd2"/>
<path d="M478,357 L491,357 L491,380 Q485,384 479,383 Z" fill="url(#gcy)"/>
<ellipse cx="484.5" cy="356" rx="6.5" ry="2.5" fill="#50505c"/><path d="M480,355 L489,357" stroke="#58e058" stroke-width="0.8"/>
</g>
<g fill="none" stroke="#3ad83a" stroke-width="1.3" stroke-linejoin="round" stroke-linecap="round">
<!-- outer silhouette -->
<path d="M352,279 Q352,273 358,272 L758,164 Q766,162 773,164 L940.5,235 Q944.5,237 944.5,241 L945.5,356 Q945,366 937,369 L543,477 Q532,481 522,475 L366,408 Q357,405 355,393 Z" stroke-width="2"/>
<!-- rim outer second line -->
<path d="M356,275 L759,166 L772,166 L940,237"/>
<!-- inner rim lines -->
<path d="M372,288 L764,179 L771,179 L922,246" stroke-width="1.6"/>
<!-- front-left short wall top -->
<path d="M353,279 L519,351 Q530,356 541,352 L940,240" stroke-width="2"/>
<path d="M366,282.5 L520,348.5" stroke-width="0.7" stroke="#70ea70"/>
<!-- front long wall top -->
<path d="M542,349.5 L922,244" stroke-width="0.7" stroke="#70ea70"/>
<!-- vertical edges -->
<path d="M519,351 L522,475 M541,352 L543,477 M938,240 L940,360 M764,179 L766,288 M771,179 L772,287" stroke-width="0.8"/>
<!-- fillet lines bottom -->
<path d="M357,396 L522,468 Q532,473 543,470 L943,358" stroke-width="0.8"/>
<path d="M357.5,282 L359,396" stroke-width="0.8"/>
<!-- windows -->
<path d="M363,312 L409.5,331 L411,396 L365,376 Z M371,316 L373,374 L409.5,388" stroke-width="1.3"/>
<path d="M418,324 L462.5,343 L464.5,419 L420,401 Z M425.6,329 L427,397 L462.5,412" stroke-width="1.3"/>
<path d="M470,347 L515,365 L516,441 L472,422 Z M477,351 L479,416 L515,434" stroke-width="1.3"/>
<path d="M605,269 L664.5,252.5 L664.5,285.5 L605,301 Z M659.4,255.7 L659.4,280.4 L606,297" stroke-width="1"/>
<path d="M537.5,290 L563,283 L563,312.5 L537.5,320 Z M557.7,284.8 L557.7,309.9 L538,315.9" stroke-width="1"/>
<path d="M690,292 L690,307 M720,292 L720,303" stroke-width="0.8"/>
<ellipse cx="705" cy="292.5" rx="15" ry="5" stroke-width="1"/>
</g>
</svg>


<!-- nav cube -->
<svg class="a" style="left:935px;top:100px" width="87" height="87" viewBox="0 0 87 87">
<g fill="#d6dae6">
<path d="M40,8.5L44.5,3.5 49,8.5z"/>
<path d="M40,77L44.5,82 49,77z"/>
<path d="M4.5,42L9.5,37.5V46.5z"/>
<path d="M84,42L79,37.5V46.5z"/>
</g>
<path d="M18,17Q24,10 32,7.5" stroke="#d6dae6" stroke-width="2.6" fill="none"/>
<path d="M15,19.5L20,12.5 22.5,18.5z" fill="#d6dae6"/>
<path d="M71,17Q65,10 57,7.5" stroke="#d6dae6" stroke-width="2.6" fill="none"/>
<path d="M74,19.5L69,12.5 66.5,18.5z" fill="#d6dae6"/>
<defs><linearGradient id="gcube" x1="0" y1="0" x2="1" y2="1"><stop offset="0" stop-color="#f6f8fc"/><stop offset="0.5" stop-color="#eef1f7"/><stop offset="1" stop-color="#dde2ec"/></linearGradient></defs>
<path d="M24,30 Q24,26 28,25.5 L44,23 Q46,22.7 48,23 L63,25.5 Q67,26.5 67,31 L66,54 Q65.6,57.3 62,59 L44,69 Q40,71 37,68.5 L25,55 Q24,53 24,50 Z" fill="url(#gcube)" stroke="#f4f6fa" stroke-width="1"/>
<path d="M28,27 Q40,32 44,33 L64,28" stroke="#d8dce6" stroke-width="0.8" fill="none"/>
<path d="M44.5,24V44" stroke="#8890a8" stroke-width="0.8"/>
<path d="M40.5,27V70" stroke="#4058f0" stroke-width="0.8"/>
<path d="M40.5,70L66.5,57" stroke="#b02a40" stroke-width="1.1"/>
<path d="M24,53L40,69.5" stroke="#20a040" stroke-width="1.1"/>
<path d="M29,60L44,46 M44,46L52,38" stroke="#c0c6d4" stroke-width="0.6"/>
<text x="38.5" y="30.5" font-size="5" fill="#3a50e8" font-family="Liberation Sans">z</text>
<text x="69.5" y="60" font-size="5.5" fill="#c03040" font-family="Liberation Sans">x</text>
<text x="54.5" y="52" font-size="8.6" font-style="italic" fill="#101010" stroke="#101010" stroke-width="0.25" font-family="Liberation Sans" transform="rotate(-17 54.5 52)" text-anchor="middle" letter-spacing="-0.2">Front</text>
<text x="32" y="48" font-size="5" fill="#202020" font-family="Liberation Sans" transform="rotate(60 32 48)" text-anchor="middle">Left</text>
<path d="M58,69L62,67H70V75L66,78H58z" fill="#e4e4e4" stroke="#cfcfcf" stroke-width="0.6"/>
<path d="M58,69H66V78M66,69L70,67" stroke="#cfcfcf" stroke-width="0.5" fill="none"/>
<path d="M72,71H80L76,75z" fill="#3a3a4a"/>
</svg>
<!-- axis -->
<svg class="a" style="left:985px;top:470px" width="35" height="35" viewBox="0 0 35 35">
<path d="M17.5,24V11" stroke="#2a2aa8" stroke-width="1.3"/><path d="M15.8,14.5L17.5,9 19.2,14.5z" fill="#2a2aa8"/>
<path d="M17.5,24L28,21" stroke="#b82020" stroke-width="1.2"/><path d="M24,21.5L28.5,20.8 24.8,23.6z" fill="#b82020"/>
<path d="M17.5,24L11.5,22" stroke="#20a020" stroke-width="1.5"/>
<text x="18.5" y="12" font-size="6.5" fill="#2a2a2a" font-family="Liberation Sans">Z</text>
<text x="29" y="23" font-size="6.5" fill="#3a3a3a" font-family="Liberation Sans">X</text>
<text x="11" y="21" font-size="5.5" fill="#4a4a4a" font-family="Liberation Sans">Y</text>
</svg>
<!-- left panel: combo view -->
<div class="a" style="left:1px;top:98px;width:213px;height:420px;background:#f0f0f0"></div>
<div class="a" style="left:1px;top:99px;width:213px;height:11px;background:#dadada"></div>
<div class="t" style="left:3px;top:100px"><span style="display:inline-block;width:35px;height:10px;vertical-align:top;font-size:8.4px"><span style="display:inline-block;transform:scaleX(0.694);transform-origin:0 0;position:relative;top:-0.8px;color:#111;-webkit-text-stroke:0.1px #222">コンボビュー</span></span></div>
<svg class="a" style="left:197px;top:101px" width="16" height="7"><path d="M2,2.5h3.5v3.5h-3.5z M3.5,1h3.5v3.5" fill="none" stroke="#222" stroke-width="1"/><path d="M10,1.5L14,5.5M14,1.5L10,5.5" stroke="#222" stroke-width="1.2"/></svg>
<!-- tabs -->
<div class="a" style="left:2px;top:111px;width:34px;height:14px;background:#fff;border:1px solid #dcdcdc;border-bottom:0"></div>
<div class="a" style="left:36px;top:112px;width:30px;height:13px;background:#f0f0f0;border:1px solid #dcdcdc;border-bottom:0;border-left:0"></div>
<div class="t" style="left:8px;top:113px"><span style="display:inline-block;width:19px;height:10px;vertical-align:top;font-size:8.4px"><span style="display:inline-block;transform:scaleX(0.754);transform-origin:0 0;position:relative;top:-0.8px;color:#111;-webkit-text-stroke:0.1px #222">モデル</span></span></div>
<div class="t" style="left:43px;top:113px;color:#333"><span style="display:inline-block;width:17px;height:10px;vertical-align:top;font-size:8.4px"><span style="display:inline-block;transform:scaleX(0.675);transform-origin:0 0;position:relative;top:-0.8px;color:#111;-webkit-text-stroke:0.1px #222">タスク</span></span></div>
<!-- tree -->
<div class="a" style="left:2px;top:124px;width:210px;height:190px;background:#fff;border:1px solid #a6a8b8;border-color:#a6a8b8 #d0d0d0 #d0d0d0 #d0d0d0"></div>
<div class="t" style="left:5px;top:128px;color:#222"><span style="display:inline-block;width:40px;height:10px;vertical-align:top;font-size:8.4px"><span style="display:inline-block;transform:scaleX(0.794);transform-origin:0 0;position:relative;top:-0.8px;color:#111;-webkit-text-stroke:0.1px #222">ラベルと属性</span></span></div>
<div class="a" style="left:130px;top:126px;width:1px;height:13px;background:#e6e6e6"></div>
<!-- scrollbar -->
<div class="a" style="left:201px;top:125px;width:10px;height:187px;background:#f0f0f0"></div>
<div class="a" style="left:201px;top:180px;width:10px;height:121px;background:#cdcdcd"></div>
<svg class="a" style="left:202px;top:127px" width="8" height="6"><path d="M1.5,4.5L4,2 6.5,4.5" stroke="#555" fill="none" stroke-width="1"/></svg>
<svg class="a" style="left:202px;top:304px" width="8" height="6"><path d="M1.5,1.5L4,4 6.5,1.5" stroke="#555" fill="none" stroke-width="1"/></svg>
<!-- tree items -->
<div class="arr" style="top:145.2px"></div>
<svg class="a" style="left:57px;top:141.7px" width="11" height="11"><use href="#t-origin"/></svg>
<div class="ti" style="top:141.4px">Origin001</div>
<svg class="a" style="left:57px;top:153.4px" width="11" height="11"><use href="#t-sketch"/></svg>
<div class="ti" style="top:153.1px">PLC HAT Outline</div>
<div class="arr" style="top:168.6px"></div>
<svg class="a" style="left:57px;top:165.1px" width="11" height="11"><use href="#t-pad"/></svg>
<div class="ti" style="top:164.8px">Pad</div>
<div class="arr" style="top:180.3px"></div>
<svg class="a" style="left:57px;top:176.8px" width="11" height="11"><use href="#t-pocket"/></svg>
<div class="ti" style="top:176.5px">Pocket</div>
<div class="arr" style="top:192.0px"></div>
<svg class="a" style="left:57px;top:188.5px" width="11" height="11"><use href="#t-pocket"/></svg>
<div class="ti" style="top:188.2px">Pocket001</div>
<div class="arr" style="top:203.7px"></div>
<svg class="a" style="left:57px;top:200.2px" width="11" height="11"><use href="#t-pocket"/></svg>
<div class="ti" style="top:199.9px">Pocket002</div>
<div class="arr" style="top:215.4px"></div>
<svg class="a" style="left:57px;top:211.9px" width="11" height="11"><use href="#t-pocket"/></svg>
<div class="ti" style="top:211.6px">Pocket003</div>
<div class="arr" style="top:227.1px"></div>
<svg class="a" style="left:57px;top:223.6px" width="11" height="11"><use href="#t-pad"/></svg>
<div class="ti" style="top:223.3px">Pad001</div>
<svg class="a" style="left:57px;top:235.3px" width="11" height="11"><use href="#t-fillet"/></svg>
<div class="ti" style="top:235.0px">Fillet</div>
<svg class="a" style="left:57px;top:247.0px" width="11" height="11"><use href="#t-fillet"/></svg>
<div class="ti" style="top:246.7px">Fillet001</div>
<svg class="a" style="left:57px;top:258.7px" width="11" height="11"><use href="#t-fillet"/></svg>
<div class="ti" style="top:258.4px">Fillet002</div>
<div class="a" style="left:56px;top:270.3px;width:74px;height:12px;background:#cce8ff;border:1px solid #99d1ff"></div>
<svg class="a" style="left:57px;top:270.4px" width="11" height="11"><use href="#t-fillet3"/></svg>
<div class="ti" style="top:270.1px;color:#111">Fillet003</div>
<div class="a" style="left:52px;top:282.7px;width:82px;height:2px;background:#e01020;border-radius:1px"></div>
<svg class="a" style="left:30px;top:282.6px" width="10" height="10"><use href="#t-sheet"/></svg>
<div class="ti" style="left:42px;top:281.8px;color:#111">Spreadsheet</div>
<div class="arr" style="left:19px;top:297.3px"></div>
<svg class="a" style="left:30px;top:293.8px" width="11" height="11"><use href="#t-cut"/></svg>
<div class="ti" style="left:44px;top:293.5px;color:#111">Cut003</div>

<!-- property view -->
<div class="a" style="left:2px;top:317px;width:208px;height:201px;background:#fff;border:1px solid #d0d0d0"></div>
<div class="t" style="left:5px;top:321px"><span style="display:inline-block;width:29px;height:10px;vertical-align:top;font-size:8.4px"><span style="display:inline-block;transform:scaleX(0.690);transform-origin:0 0;position:relative;top:-0.8px;color:#111;-webkit-text-stroke:0.1px #222">プロパティ</span></span></div>
<div class="t" style="left:73px;top:321px"><span style="display:inline-block;width:7px;height:10px;vertical-align:top;font-size:8.4px"><span style="display:inline-block;transform:scaleX(0.833);transform-origin:0 0;position:relative;top:-0.8px;color:#111;-webkit-text-stroke:0.1px #222">値</span></span></div>
<div class="a" style="left:70px;top:318px;width:1px;height:16px;background:#e4e4e4"></div>
<div class="a" style="left:3px;top:334px;width:206px;height:13px;background:#a0a0a0"></div>
<div class="t" style="left:18px;top:335.5px;color:#f4f4f4">Base</div>
<div class="a" style="left:3px;top:347px;width:13px;height:27px;background:#f3f3f3"></div>
<div class="a" style="left:16px;top:347px;width:193px;height:13.5px;background:#f7f7f7;border-bottom:1px solid #ececec"></div>
<div class="a" style="left:16px;top:360.5px;width:193px;height:13.5px;background:#fff;border-bottom:1px solid #ececec"></div>
<div class="a" style="left:70px;top:347px;width:1px;height:27px;background:#e6e6e6"></div>
<div class="t" style="left:18px;top:349px">Radius</div>
<div class="t" style="left:73px;top:349px">3.00 mm</div>
<div class="t" style="left:18px;top:362.5px">Label</div>
<div class="t" style="left:73px;top:362.5px">Fillet003</div>
<!-- bottom tabs -->
<div class="a" style="left:2px;top:518px;width:210px;height:11px;background:#fff"></div>
<svg class="a" style="left:2px;top:517px" width="70" height="13"><path d="M1,1Q3,10 6,11H28Q31,11 32,6L34,1L37,6Q38,11 41,11H62Q65,11 66,6L68,1" fill="none" stroke="#666" stroke-width="0.8"/></svg>
<div class="t" style="left:10px;top:519px"><span style="display:inline-block;width:15px;height:10px;vertical-align:top;font-size:8.4px"><span style="display:inline-block;transform:scaleX(0.893);transform-origin:0 0;position:relative;top:-0.8px;color:#111;-webkit-text-stroke:0.1px #222">表示</span></span></div>
<div class="t" style="left:41px;top:519px;color:#444"><span style="display:inline-block;width:19px;height:10px;vertical-align:top;font-size:8.4px"><span style="display:inline-block;transform:scaleX(0.754);transform-origin:0 0;position:relative;top:-0.8px;color:#111;-webkit-text-stroke:0.1px #222">データ</span></span></div>

<!-- doc tabs -->
<div class="a" style="left:217px;top:516px;width:83px;height:13px;background:#ececec;border:1px solid #dedede;border-top:0"></div>
<div class="a" style="left:300px;top:516px;width:101px;height:14px;background:#fbfbfb;border:1px solid #e2e2e2;border-top:0"></div>
<svg class="a" style="left:225px;top:517px" width="11" height="11"><use href="#f-logo"/></svg>
<div class="t" style="left:237px;top:518px;color:#333"><span style="display:inline-block;width:43px;height:10px;vertical-align:top;font-size:8.4px"><span style="display:inline-block;transform:scaleX(0.731);transform-origin:0 0;position:relative;top:-0.8px;color:#111;-webkit-text-stroke:0.1px #222">スタートページ</span></span></div>
<div class="a" style="left:283px;top:518px;width:8px;height:8px;background:#cfcfcf;border:1px solid #bdbdbd"></div>
<svg class="a" style="left:284px;top:519px" width="6" height="6"><path d="M1,1L5,5M5,1L1,5" stroke="#fff" stroke-width="1"/></svg>
<svg class="a" style="left:309px;top:518px" width="11" height="11"><use href="#f-logo"/></svg>
<div class="t" style="left:322px;top:518px;color:#222;font-size:7.4px">PLC_HAT_R01 &nbsp;: 1</div>
<div class="a" style="left:385px;top:518px;width:8px;height:8px;background:#e06040;border-radius:1px"></div>
<svg class="a" style="left:386px;top:519px" width="6" height="6"><path d="M1,1L5,5M5,1L1,5" stroke="#fff" stroke-width="1"/></svg>

<!-- status bar -->
<div class="a" style="left:872px;top:531px;width:1px;height:16px;background:#dcdcdc"></div>
<svg class="a" style="left:882px;top:533px" width="9" height="12"><rect x="1" y="1" width="7" height="10" rx="3.5" fill="none" stroke="#333" stroke-width="1"/><path d="M4.5,1V5M1,5H8" stroke="#333" stroke-width="0.8"/></svg>
<div class="t" style="left:893px;top:535px;color:#222">Blende</div>
<svg class="a" style="left:919px;top:537px" width="6" height="4"><path d="M0,0.5h5L2.5,3z" fill="#222"/></svg>
<div class="a" style="left:928px;top:531px;width:1px;height:16px;background:#dcdcdc"></div>
<div class="t" style="left:931px;top:535px;color:#222">165.27 mm x 85.53 mm</div>
<div class="a" style="left:1014px;top:531px;width:1px;height:16px;background:#dcdcdc"></div>
<svg class="a" style="left:1015px;top:538px" width="7" height="8"><path d="M6,2L2,6M6,4L4,6" stroke="#b0b0b0" stroke-width="1"/></svg>

<!-- window frame -->
<div class="a" style="left:0;top:0;width:1024px;height:1px;background:#6b6b6b"></div>
<div class="a" style="left:0;top:0;width:1px;height:549px;background:#707070"></div>
<div class="a" style="left:0;top:161px;width:1px;height:46px;background:#f0b4bc"></div>
<div class="a" style="left:0;top:207px;width:1px;height:46px;background:#f0bc8c"></div>
<div class="a" style="left:0;top:253px;width:1px;height:45px;background:#ecee9c"></div>
<div class="a" style="left:1px;top:161px;width:1px;height:137px;background:#8a8a8a"></div>
<div class="a" style="left:1022px;top:0;width:2px;height:549px;background:#707070"></div>
<div class="a" style="left:0;top:547px;width:1024px;height:2px;background:#6b6b6b"></div>
</body></html>
